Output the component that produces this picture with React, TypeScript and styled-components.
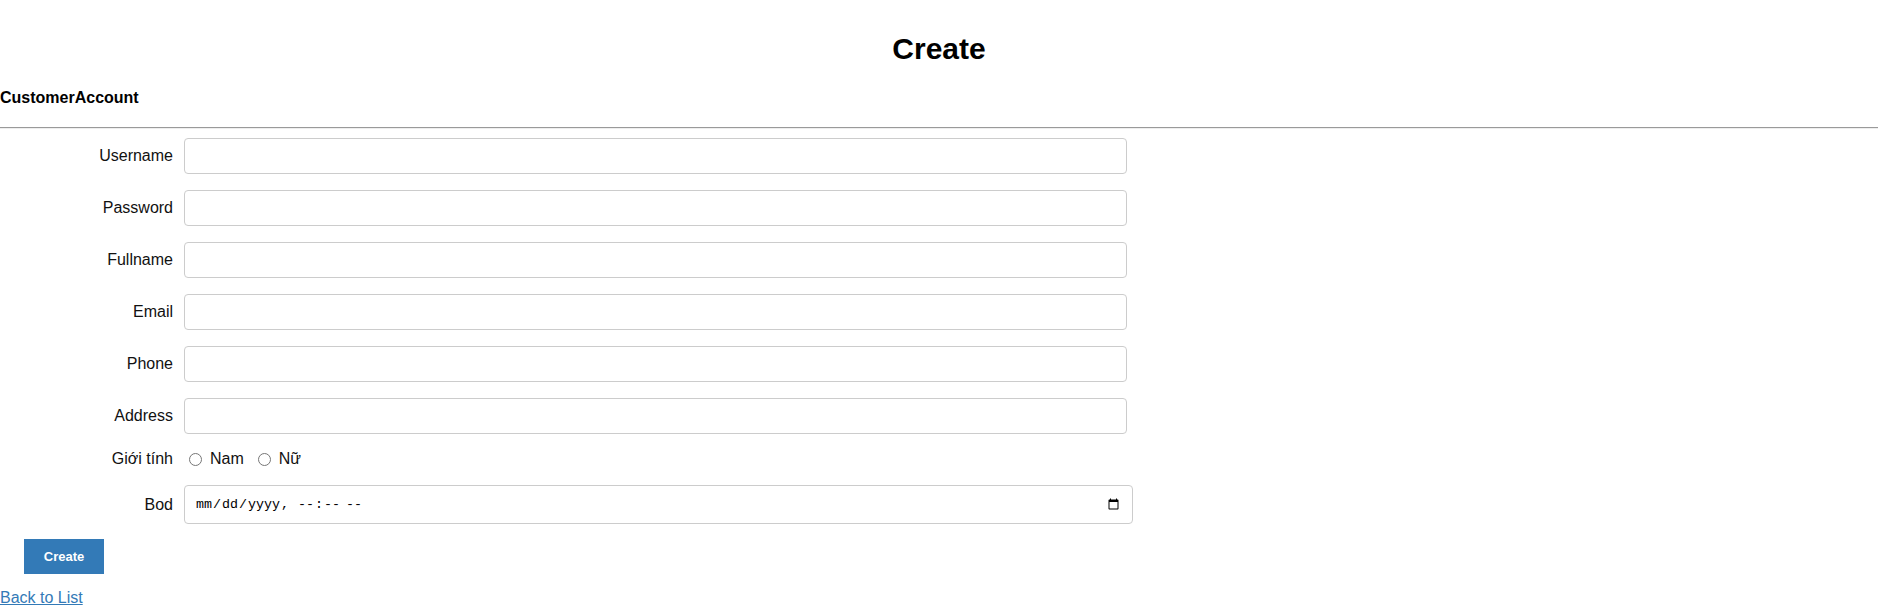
import styled, { createGlobalStyle } from 'styled-components';

const GlobalStyle = createGlobalStyle`
  body {
    margin: 0;
    background: #fff;
    font-family: 'Liberation Sans', Arial, sans-serif;
    color: #000;
  }
`;

const Page = styled.div`
  width: 1878px;
  height: 616px;
  overflow: hidden;
`;

const Title = styled.h2`
  margin: 32px 0 0;
  font-size: 30px;
  line-height: 33px;
  font-weight: bold;
  text-align: center;
`;

const Subtitle = styled.h4`
  margin: 23px 0 0;
  font-size: 16px;
  line-height: 20px;
  font-weight: bold;
`;

const Rule = styled.hr`
  margin: 19px 0 9px;
  border: 0;
  border-top: 1px solid #9a9a9a;
  border-bottom: 1px solid #eee;
`;

const Form = styled.form`
  display: flex;
  flex-direction: column;
`;

const Row = styled.div<{ $height?: number; $gap?: number }>`
  display: flex;
  align-items: center;
  height: ${(p) => p.$height ?? 36}px;
  margin-bottom: ${(p) => p.$gap ?? 16}px;
`;

const Label = styled.label`
  width: 173px;
  margin-right: 11px;
  text-align: right;
  font-size: 16px;
  color: #111;
`;

const TextInput = styled.input<{ $width?: number }>`
  box-sizing: border-box;
  width: ${(p) => p.$width ?? 943}px;
  height: 100%;
  border: 1px solid #ccc;
  border-radius: 4px;
  padding: 0 10px;
  font-size: 14px;
  background: #fff;
  outline: none;
`;

const DateInput = styled(TextInput)`
  font-family: 'Liberation Mono', 'DejaVu Sans Mono', monospace;
  font-size: 13.333px;
  color: #000;
`;

const RadioGroup = styled.div`
  display: flex;
  align-items: center;
  font-size: 16px;
  color: #111;
`;

const RadioOption = styled.label`
  display: flex;
  align-items: center;
  gap: 8px;
  margin-left: 5px;
  margin-right: 9px;

  input {
    width: 13px;
    height: 13px;
    margin: 0;
  }
`;

const SubmitButton = styled.button`
  width: 80px;
  height: 35px;
  margin: -1px 0 0 24px;
  border: 0;
  background: #337ab7;
  color: #fff;
  font-family: 'Liberation Sans', Arial, sans-serif;
  font-size: 13px;
  font-weight: bold;
  cursor: pointer;
`;

const BackLink = styled.a`
  display: block;
  margin-top: 14px;
  font-size: 16px;
  line-height: 20px;
  color: #337ab7;
  text-decoration: underline;
`;

const fields = ['Username', 'Password', 'Fullname', 'Email', 'Phone', 'Address'];

const App = () => {
  return (
    <Page>
      <GlobalStyle />
      <Title>Create</Title>
      <Subtitle>CustomerAccount</Subtitle>
      <Rule />
      <Form onSubmit={(e) => e.preventDefault()}>
        {fields.map((f, i) => (
          <Row key={f} $gap={i === fields.length - 1 ? 15 : 16}>
            <Label htmlFor={f}>{f}</Label>
            <TextInput id={f} name={f} type={f === 'Password' ? 'password' : 'text'} />
          </Row>
        ))}
        <Row $height={20} $gap={16}>
          <Label>Giới tính</Label>
          <RadioGroup>
            <RadioOption>
              <input type="radio" name="gender" value="Nam" />
              Nam
            </RadioOption>
            <RadioOption>
              <input type="radio" name="gender" value="Nữ" />
              Nữ
            </RadioOption>
          </RadioGroup>
        </Row>
        <Row $height={39}>
          <Label htmlFor="Bod">Bod</Label>
          <DateInput id="Bod" name="Bod" type="datetime-local" $width={949} />
        </Row>
        <div>
          <SubmitButton type="submit">Create</SubmitButton>
        </div>
      </Form>
      <BackLink href="#">Back to List</BackLink>
    </Page>
  );
};

export default App;
